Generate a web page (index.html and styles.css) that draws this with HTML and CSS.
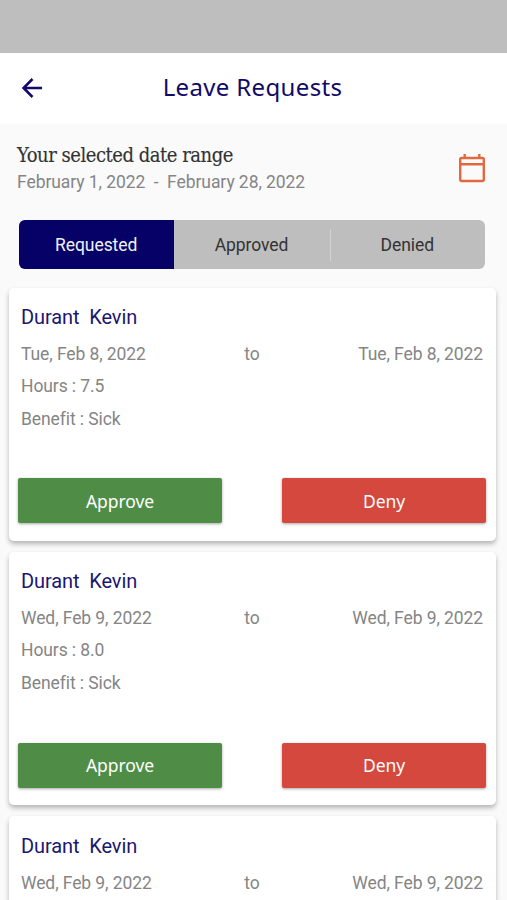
FILE: index.html
```html
<!DOCTYPE html>
<html lang="en">
<head>
	<meta charset="utf-8">
	<title>Leave Requests</title>
	<link rel="stylesheet" href="styles.css">
</head>
<body>
<div class="screen">
	<div class="status_bar"></div>

	<header class="top_bar">
		<svg class="back" viewBox="0 0 20 20"><path d="M10.5 1 1.6 10l8.900 9M1.600 10H20"/></svg>
		<h1>Leave Requests</h1>
	</header>

	<div class="range">
		<div>
			<h2>Your selected date range</h2>
			<p>February 1, 2022 &nbsp;-&nbsp; February 28, 2022</p>
		</div>
		<svg class="calendar" viewBox="0 0 26 29"><path d="M2.6 4h20.800q1.400 0 1.400 1.400v20.200q0 1.400-1.400 1.400H2.600q-1.400 0-1.400-1.400V5.400q0-1.400 1.400-1.400zM1.200 10.300h23.600M5.700 0v4M20.300 0v4"/></svg>
	</div>

	<div class="tabs">
		<div class="tab active">Requested</div>
		<div class="tab">Approved</div>
		<div class="tab last">Denied</div>
	</div>

	<div class="card">
		<h3>Durant&nbsp; Kevin</h3>
		<div class="dates"><span>Tue, Feb 8, 2022</span><span class="to">to</span><span class="end">Tue, Feb 8, 2022</span></div>
		<p>Hours : 7.5</p>
		<p>Benefit : Sick</p>
		<div class="buttons">
			<button type="button" class="approve">Approve</button>
			<button type="button" class="deny">Deny</button>
		</div>
	</div>

	<div class="card">
		<h3>Durant&nbsp; Kevin</h3>
		<div class="dates"><span>Wed, Feb 9, 2022</span><span class="to">to</span><span class="end">Wed, Feb 9, 2022</span></div>
		<p>Hours : 8.0</p>
		<p>Benefit : Sick</p>
		<div class="buttons">
			<button type="button" class="approve">Approve</button>
			<button type="button" class="deny">Deny</button>
		</div>
	</div>

	<div class="card cut">
		<h3>Durant&nbsp; Kevin</h3>
		<div class="dates"><span>Wed, Feb 9, 2022</span><span class="to">to</span><span class="end">Wed, Feb 9, 2022</span></div>
	</div>
</div>
</body>
</html>
```
FILE: styles.css
```css
* {
	box-sizing: border-box;
}
body {
	margin: 0;
	background: #fafafa;
	font-family: Roboto, sans-serif;
	color: #858585;
}
h1, h2, h3, p {
	margin: 0;
	font-weight: normal;
	white-space: nowrap;
}
svg {
	fill: none;
}
.screen {
	display: flex;
	flex-direction: column;
	height: 900px;
	overflow: hidden;
}
.status_bar {
	height: 53px;
	background: #bebebe;
}
.top_bar {
	display: grid;
	grid-template-columns: 64px 1fr 66px;
	align-items: center;
	height: 71px;
	padding-bottom: 2px;
	background: #fff;
}
.back {
	width: 20px;
	height: 20px;
	margin-left: 22px;
	stroke: #120a69;
	stroke-width: 2.5;
}
h1 {
	padding-bottom: 2px;
	text-align: center;
	font: 24px/32px "Noto Sans", sans-serif;
	letter-spacing: 0.35px;
	color: #120a69;
}
.range {
	display: flex;
	justify-content: space-between;
	height: 95.5px;
	padding: 19px 22px 0 17px;
}
h2 {
	font: 20px/25px "DejaVu Serif Condensed", "DejaVu Serif", serif;
	letter-spacing: -0.47px;
	-webkit-text-stroke: 0.15px #333;
	color: #333;
}
.range p {
	font-size: 17.5px;
	line-height: 28px;
	letter-spacing: -0.07px;
}
.calendar {
	width: 26px;
	height: 29px;
	margin-top: 11px;
	stroke: #e1683f;
	stroke-width: 2.4;
}
.tabs {
	display: grid;
	grid-template-columns: repeat(3, 1fr);
	align-items: center;
	height: 49.5px;
	margin: 0 22px 18.5px 19px;
	border-radius: 6px;
	overflow: hidden;
	background: #bebebe;
}
.tab {
	padding-right: 1px;
	font-size: 17.5px;
	line-height: 32px;
	letter-spacing: -0.07px;
	text-align: center;
	color: #333;
}
.active {
	line-height: 50px;
	background: #050166;
	color: #f0f0fa;
}
.last {
	border-left: 1px solid #d2d2d2;
}
.card {
	flex: none;
	height: 253.5px;
	margin: 0 11px 10.7px 8.5px;
	padding: 14.7px 10px 0 9.5px;
	border-radius: 5px;
	background: #fff;
	box-shadow: 0 3px 5px rgba(0, 0, 0, 0.28);
	font-size: 17.5px;
	letter-spacing: -0.09px;
}
.cut {
	flex: 1;
	height: auto;
	margin-bottom: 0;
	border-radius: 5px 5px 0 0;
}
h3 {
	padding-left: 3px;
	font-size: 20px;
	line-height: 30px;
	color: #1c1670;
}
.dates {
	display: grid;
	grid-template-columns: 1fr 30px 1fr;
	padding: 6px 3px 0 3px;
	line-height: 32px;
}
.to {
	text-align: center;
}
.end {
	text-align: right;
}
.card p {
	padding-left: 3px;
	line-height: 32.5px;
}
.buttons {
	display: flex;
	justify-content: space-between;
	margin-top: 43.2px;
}
button {
	width: 204px;
	height: 45px;
	border: 0;
	border-radius: 2px;
	padding: 0;
	box-shadow: 0 1px 3px rgba(0, 0, 0, 0.35);
	font: 17.5px "Noto Sans", sans-serif;
	letter-spacing: -0.07px;
	color: #fff;
}
.approve {
	background: #4f8d46;
}
.deny {
	background: #d4483e;
}
```
